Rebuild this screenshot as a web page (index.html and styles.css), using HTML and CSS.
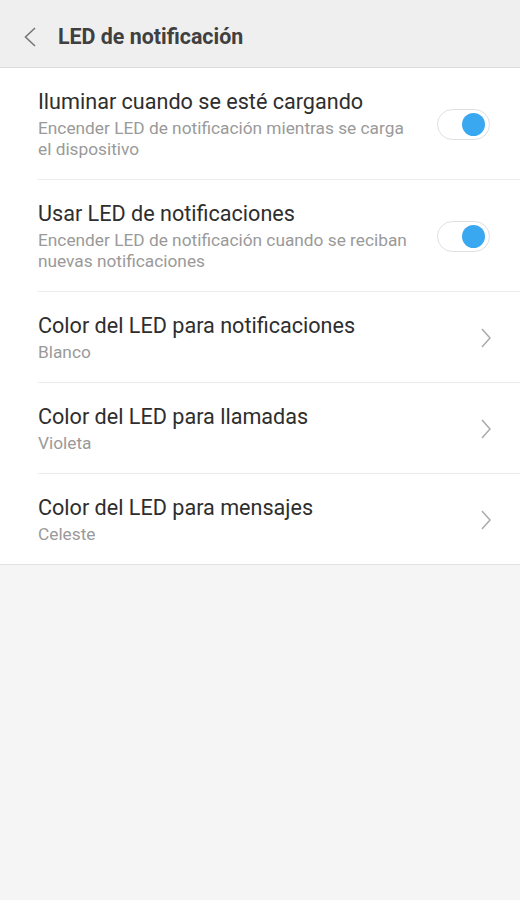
FILE: index.html
```html
<!DOCTYPE html>
<html lang="es">
<head>
    <meta charset="UTF-8">
    <meta name="viewport" content="width=device-width, initial-scale=1.0">
    <title>LED de notificación</title>
    <link rel="stylesheet" href="styles.css">
</head>
<body>

    <div class="header">
        <div class="back">
            <svg width="12" height="20" viewBox="0 0 12 20">
                <path d="M11 1 L1.5 10 L11 19" fill="none" stroke="#777" stroke-width="1.6"/>
            </svg>
        </div>
        <div class="header-title">LED de notificación</div>
    </div>

    <div class="list">
        <div class="item">
            <div class="item-text">
                <div class="item-title">Iluminar cuando se esté cargando</div>
                <div class="item-sub">Encender LED de notificación mientras se carga el dispositivo</div>
            </div>
            <div class="toggle on"><div class="knob"></div></div>
        </div>
        <div class="item">
            <div class="item-text">
                <div class="item-title">Usar LED de notificaciones</div>
                <div class="item-sub">Encender LED de notificación cuando se reciban nuevas notificaciones</div>
            </div>
            <div class="toggle on"><div class="knob"></div></div>
        </div>
        <div class="item">
            <div class="item-text">
                <div class="item-title">Color del LED para notificaciones</div>
                <div class="item-sub">Blanco</div>
            </div>
            <div class="arrow">
                <svg width="12" height="20" viewBox="0 0 12 20">
                    <path d="M2 1 L10 10 L2 19" fill="none" stroke="#aaa" stroke-width="1.5"/>
                </svg>
            </div>
        </div>
        <div class="item">
            <div class="item-text">
                <div class="item-title">Color del LED para llamadas</div>
                <div class="item-sub">Violeta</div>
            </div>
            <div class="arrow">
                <svg width="12" height="20" viewBox="0 0 12 20">
                    <path d="M2 1 L10 10 L2 19" fill="none" stroke="#aaa" stroke-width="1.5"/>
                </svg>
            </div>
        </div>
        <div class="item">
            <div class="item-text">
                <div class="item-title">Color del LED para mensajes</div>
                <div class="item-sub">Celeste</div>
            </div>
            <div class="arrow">
                <svg width="12" height="20" viewBox="0 0 12 20">
                    <path d="M2 1 L10 10 L2 19" fill="none" stroke="#aaa" stroke-width="1.5"/>
                </svg>
            </div>
        </div>
    </div>

</body>
</html>
```

FILE: styles.css
```css
html, body {
    margin: 0;
    padding: 0;
    height: 100%;
    font-family: Roboto, sans-serif;
    background-color: #f5f5f5;
}

.header {
    height: 68px;
    display: flex;
    align-items: center;
    padding-top: 6px;
    box-sizing: border-box;
    background-color: #efefef;
    border-bottom: 1px solid #dcdcdc;
}

.back {
    width: 58px;
    padding-left: 24px;
    box-sizing: border-box;
}

.back svg {
    display: block;
}

.header-title {
    font-size: 21.4px;
    font-weight: bold;
    color: #404040;
}

.list {
    background-color: #fff;
    border-bottom: 1px solid #e2e2e2;
}

.item {
    display: flex;
    align-items: center;
    margin-left: 38px;
    padding: 20px 28px 19px 0;
    border-bottom: 1px solid #ececec;
}

.item:last-child {
    border-bottom: none;
}

.item-text {
    flex: 1;
}

.item-title {
    font-size: 21.6px;
    line-height: 27px;
    color: #2e2e2e;
}

.item-sub {
    font-size: 17.3px;
    line-height: 21px;
    color: #9a9a9a;
    margin-top: 3px;
    padding-right: 22px;
}

.toggle {
    width: 53px;
    height: 31px;
    border: 1px solid #e0e0e0;
    border-radius: 16px;
    background-color: #fff;
    display: flex;
    align-items: center;
    justify-content: flex-end;
    padding-right: 4px;
    box-sizing: border-box;
    margin-right: 2px;
}

.knob {
    width: 23px;
    height: 23px;
    border-radius: 50%;
    background-color: #3aa8f1;
}

.arrow svg {
    display: block;
}
```
